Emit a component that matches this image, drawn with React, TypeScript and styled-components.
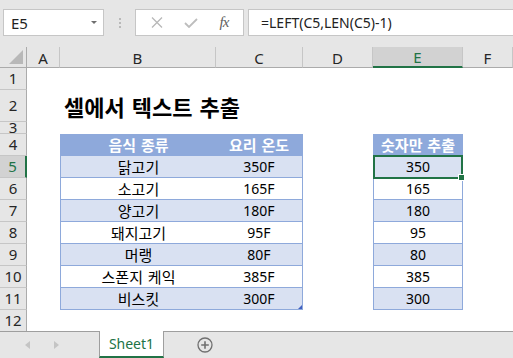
import React from "react";
import styled, { createGlobalStyle } from "styled-components";

const GREEN = "#217346";
const TABLE_BLUE = "#8ea9db";
const BAND = "#d9e1f2";
const HEAD_BG = "#e6e6e6";
const LINE = "#c6c6c6";

const GlobalStyle = createGlobalStyle`
  html, body {
    margin: 0;
    padding: 0;
    background: #fff;
  }
  body {
    font-family: "Noto Sans", "Noto Sans CJK KR", sans-serif;
    overflow: hidden;
  }
  * {
    box-sizing: border-box;
  }
`;

const Window = styled.div`
  width: 513px;
  height: 358px;
  display: flex;
  flex-direction: column;
  overflow: hidden;
`;

/* formula bar */

const FormulaBar = styled.div`
  flex: none;
  height: 47px;
  background: ${HEAD_BG};
  display: flex;
  align-items: flex-start;
  padding: 9px 0 0 3px;
`;

const NameBox = styled.div`
  width: 101px;
  height: 27px;
  background: #fff;
  border: 1px solid ${LINE};
  display: flex;
  align-items: center;
  justify-content: space-between;
  padding: 0 6px 0 7px;
  font-size: 15px;
  color: #222;
`;

const Caret = styled.span`
  width: 0;
  height: 0;
  border-left: 3px solid transparent;
  border-right: 3px solid transparent;
  border-top: 3px solid #6e6e6e;
`;

const Grip = styled.div`
  width: 31px;
  height: 27px;
  display: flex;
  flex-direction: column;
  align-items: center;
  justify-content: center;
  gap: 2px;

  span {
    width: 2px;
    height: 2px;
    background: #b9b9b9;
  }
`;

const FormulaButtons = styled.div`
  width: 109px;
  height: 27px;
  background: #fff;
  border: 1px solid ${LINE};
  display: flex;
  align-items: center;
  justify-content: space-around;
  padding: 0 4px;
`;

const Fx = styled.span`
  font-family: "Liberation Serif", serif;
  font-style: italic;
  font-size: 15px;
  color: #606060;
  letter-spacing: -1px;
`;

const FormulaInput = styled.div`
  flex: 1;
  height: 27px;
  margin-left: 4px;
  background: #fff;
  border: 1px solid ${LINE};
  border-right: none;
  display: flex;
  align-items: center;
  padding-left: 12px;
  font-size: 14px;
  color: #222;
  white-space: nowrap;
`;

/* sheet grid */

const Sheet = styled.div`
  flex: none;
  height: 284px;
  overflow: hidden;
  background: #fff;
  display: grid;
  grid-template-columns: 27px 33px 156px 87px 70px 90px 1fr;
  grid-template-rows: 21px 22px 32px 12px repeat(9, 22px);
`;

const Corner = styled.div`
  background: ${HEAD_BG};
  border-right: 1px solid #ababab;
  border-bottom: 1px solid #ababab;
  display: flex;
  align-items: flex-end;
  justify-content: flex-end;
  padding: 0 3px 3px 0;
`;

const ColHeader = styled.div<{ $active?: boolean }>`
  background: ${(p) => (p.$active ? "#d2d2d2" : HEAD_BG)};
  border-right: 1px solid ${LINE};
  border-bottom: ${(p) => (p.$active ? `2px solid ${GREEN}` : "1px solid #ababab")};
  color: ${(p) => (p.$active ? GREEN : "#262626")};
  font-size: 15px;
  display: flex;
  align-items: center;
  justify-content: center;
  padding-top: 1px;
`;

const RowHeader = styled.div<{ $active?: boolean }>`
  background: ${(p) => (p.$active ? "#d2d2d2" : HEAD_BG)};
  border-right: ${(p) => (p.$active ? `2px solid ${GREEN}` : "1px solid #ababab")};
  border-bottom: 1px solid ${LINE};
  color: ${(p) => (p.$active ? GREEN : "#262626")};
  font-size: 15px;
  line-height: 1;
  overflow: hidden;
  display: flex;
  align-items: center;
  justify-content: center;
`;

const Blank = styled.div``;

const TitleCell = styled.div`
  display: flex;
  align-items: center;
  padding-left: 4px;
  white-space: nowrap;
  font-family: "Noto Sans CJK KR", sans-serif;
  font-weight: 700;
  font-size: 22px;
  word-spacing: 2px;
  color: #000;
`;

type Kind = "head" | "band" | "plain";

const TableCell = styled.div<{
  $kind: Kind;
  $left?: boolean;
  $right?: boolean;
  $num?: boolean;
  $selected?: boolean;
  $corner?: boolean;
}>`
  position: relative;
  z-index: ${(p) => (p.$selected ? 2 : "auto")};
  display: flex;
  align-items: center;
  justify-content: center;
  white-space: nowrap;
  background: ${(p) =>
    p.$kind === "head" ? TABLE_BLUE : p.$kind === "band" ? BAND : "#fff"};
  color: ${(p) => (p.$kind === "head" ? "#fff" : "#000")};
  font-weight: ${(p) => (p.$kind === "head" ? 700 : 400)};
  font-size: ${(p) => (p.$num ? "14px" : "15px")};
  word-spacing: 1px;
  border-bottom: 1px solid ${TABLE_BLUE};
  border-left: ${(p) => (p.$left ? `1px solid ${TABLE_BLUE}` : "none")};
  border-right: ${(p) => (p.$right ? `1px solid ${TABLE_BLUE}` : "none")};

  ${(p) =>
    p.$corner &&
    `
    &::after {
      content: "";
      position: absolute;
      right: 0;
      bottom: 0;
      width: 0;
      height: 0;
      border-left: 4px solid transparent;
      border-bottom: 4px solid #4060c0;
    }
  `}
`;

const Selection = styled.div`
  position: absolute;
  top: -1px;
  left: -1px;
  right: -1px;
  bottom: -2px;
  border: 2px solid ${GREEN};
  pointer-events: none;
`;

const FillHandle = styled.div`
  position: absolute;
  right: -4px;
  bottom: -4px;
  width: 7px;
  height: 7px;
  background: ${GREEN};
  border: 1px solid #fff;
`;

/* sheet tabs */

const TabBar = styled.div`
  flex: 1;
  background: ${HEAD_BG};
  border-top: 1px solid #9e9e9e;
  display: flex;
  align-items: stretch;
`;

const TabNav = styled.div`
  width: 99px;
  display: flex;
  align-items: center;
  padding-left: 25px;
  gap: 24px;
`;

const Tab = styled.div`
  width: 65px;
  margin-top: -1px;
  background: #fff;
  border-left: 1px solid #9e9e9e;
  border-right: 1px solid #9e9e9e;
  border-bottom: 2px solid ${GREEN};
  display: flex;
  align-items: center;
  justify-content: center;
  color: ${GREEN};
  font-size: 14px;
`;

const AddSheet = styled.div`
  margin-left: 33px;
  display: flex;
  align-items: center;
`;

const COLS = ["A", "B", "C", "D", "E", "F"];

const foods: [string, string, string][] = [
  ["닭고기", "350F", "350"],
  ["소고기", "165F", "165"],
  ["양고기", "180F", "180"],
  ["돼지고기", "95F", "95"],
  ["머랭", "80F", "80"],
  ["스폰지 케익", "385F", "385"],
  ["비스킷", "300F", "300"],
];

const BlankRow = ({ n }: { n: number }) => (
  <>
    <RowHeader>{n}</RowHeader>
    {COLS.map((c) => (
      <Blank key={c} />
    ))}
  </>
);

export default function App() {
  return (
    <Window>
      <GlobalStyle />
      <FormulaBar>
        <NameBox>
          E5
          <Caret />
        </NameBox>
        <Grip>
          <span />
          <span />
          <span />
        </Grip>
        <FormulaButtons>
          <svg width="12" height="11" viewBox="0 0 12 11">
            <path d="M1 0.5 L11 10.5 M11 0.5 L1 10.5" stroke="#b8b8b8" strokeWidth="1.3" fill="none" />
          </svg>
          <svg width="14" height="10" viewBox="0 0 14 10">
            <path d="M1 5 L5 9 L13 1" stroke="#bdbdbd" strokeWidth="1.8" fill="none" />
          </svg>
          <Fx>fx</Fx>
        </FormulaButtons>
        <FormulaInput>=LEFT(C5,LEN(C5)-1)</FormulaInput>
      </FormulaBar>

      <Sheet>
        <Corner>
          <svg width="14" height="14" viewBox="0 0 14 14">
            <path d="M14 0 L14 14 L0 14 Z" fill="#b8b8b8" />
          </svg>
        </Corner>
        {COLS.map((c) => (
          <ColHeader key={c} $active={c === "E"}>
            {c}
          </ColHeader>
        ))}

        <BlankRow n={1} />

        <RowHeader>2</RowHeader>
        <Blank />
        <TitleCell>셀에서 텍스트 추출</TitleCell>
        <Blank />
        <Blank />
        <Blank />
        <Blank />

        <BlankRow n={3} />

        <RowHeader>4</RowHeader>
        <Blank />
        <TableCell $kind="head" $left>
          음식 종류
        </TableCell>
        <TableCell $kind="head" $right>
          요리 온도
        </TableCell>
        <Blank />
        <TableCell $kind="head" $left $right>
          숫자만 추출
        </TableCell>
        <Blank />

        {foods.map(([name, temp, num], i) => {
          const kind: Kind = i % 2 === 0 ? "band" : "plain";
          const row = i + 5;
          const selected = row === 5;
          return (
            <React.Fragment key={row}>
              <RowHeader $active={selected}>{row}</RowHeader>
              <Blank />
              <TableCell $kind={kind} $left>
                {name}
              </TableCell>
              <TableCell $kind={kind} $right $num $corner={row === 11}>
                {temp}
              </TableCell>
              <Blank />
              <TableCell $kind={kind} $left $right $num $selected={selected}>
                {num}
                {selected && (
                  <Selection>
                    <FillHandle />
                  </Selection>
                )}
              </TableCell>
              <Blank />
            </React.Fragment>
          );
        })}

        <BlankRow n={12} />
      </Sheet>

      <TabBar>
        <TabNav>
          <svg width="5" height="8" viewBox="0 0 5 8">
            <path d="M5 0 L0 4 L5 8 Z" fill="#c4c4c4" />
          </svg>
          <svg width="5" height="8" viewBox="0 0 5 8">
            <path d="M0 0 L5 4 L0 8 Z" fill="#c4c4c4" />
          </svg>
        </TabNav>
        <Tab>Sheet1</Tab>
        <AddSheet>
          <svg width="16" height="16" viewBox="0 0 16 16">
            <circle cx="8" cy="8" r="7" stroke="#707070" strokeWidth="1.3" fill="none" />
            <path d="M8 4.2 V11.8 M4.2 8 H11.8" stroke="#707070" strokeWidth="1.6" />
          </svg>
        </AddSheet>
      </TabBar>
    </Window>
  );
}
